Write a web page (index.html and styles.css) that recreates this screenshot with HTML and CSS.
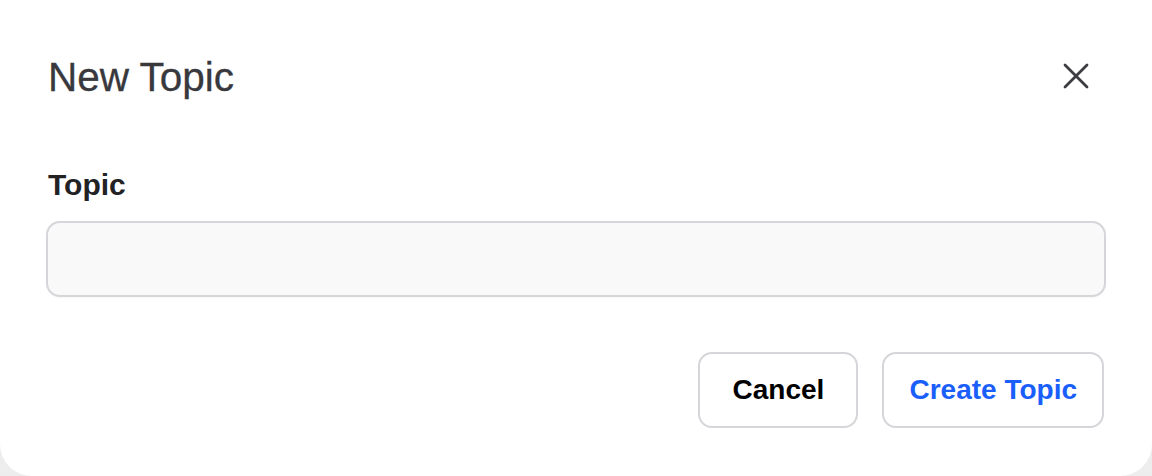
FILE: index.html
```html
<!DOCTYPE html>
<html lang="en">
<head>
<meta charset="utf-8">
<title>New Topic</title>
<link rel="stylesheet" href="styles.css">
</head>
<body>
<div class="modal">
  <header class="modal-header">
    <h1 class="modal-title">New Topic</h1>
    <button class="close-btn" aria-label="Close">
      <svg width="26" height="26" viewBox="0 0 26 26" fill="none" stroke="#3c3c41" stroke-width="2.8" stroke-linecap="round">
        <path d="M2 2 L24 24 M24 2 L2 24"/>
      </svg>
    </button>
  </header>
  <label class="field-label" for="topic">Topic</label>
  <input id="topic" class="field-input" type="text">
  <footer class="modal-footer">
    <button class="btn btn-cancel">Cancel</button>
    <button class="btn btn-primary">Create Topic</button>
  </footer>
</div>
</body>
</html>
```

FILE: styles.css
```css
* { box-sizing: border-box; }
html, body {
  margin: 0;
  height: 100%;
}
body {
  background: #ededed;
  font-family: "Liberation Sans", Arial, sans-serif;
  overflow: hidden;
}
.modal {
  background: #ffffff;
  width: 1152px;
  height: 506px;
  margin-top: -30px;
  border-radius: 32px;
  padding: 60px 46px 0 48px;
  display: flex;
  flex-direction: column;
}
.modal-header {
  display: flex;
  align-items: center;
  justify-content: space-between;
  height: 94px;
}
.modal-title {
  margin: 0;
  font-size: 40.5px;
  font-weight: 400;
  color: #38383d;
  line-height: 1;
  -webkit-text-stroke: 0.3px #38383d;
}
.close-btn {
  background: none;
  border: none;
  padding: 0;
  width: 26px;
  height: 26px;
  margin-right: 17px;
  margin-top: -2px;
  display: flex;
}
.field-label {
  margin-top: 43px;
  font-size: 30px;
  font-weight: 700;
  color: #222225;
  line-height: 36px;
  height: 36px;
}
.field-input {
  margin-top: 18px;
  margin-left: -2px;
  width: 1060px;
  height: 76px;
  border: 2px solid #d6d6da;
  border-radius: 14px;
  background: #f9f9f9;
  box-shadow: 0 1px 2px rgba(0,0,0,0.04);
  font-size: 28px;
  padding: 0 20px;
  outline: none;
}
.modal-footer {
  display: flex;
  justify-content: flex-end;
  gap: 24px;
  margin-top: 55px;
  padding-right: 2px;
}
.btn {
  height: 76px;
  background: #ffffff;
  border: 2px solid #d6d6da;
  border-radius: 14px;
  font-family: "Liberation Sans", Arial, sans-serif;
  font-size: 28px;
  font-weight: 700;
  padding: 0 25px;
}
.btn-cancel {
  min-width: 160px;
  color: #000000;
}
.btn-primary {
  color: #1a5ffb;
}
```
